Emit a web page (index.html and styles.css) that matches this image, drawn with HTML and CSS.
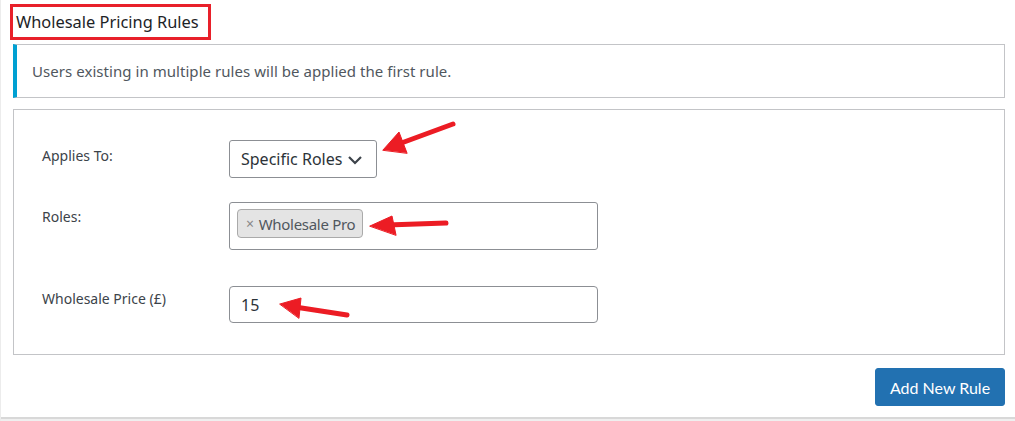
FILE: index.html
```html
<!DOCTYPE html>
<html>
<head>
<meta charset="utf-8">
<link rel="stylesheet" href="styles.css">
</head>
<body>
<div class="page">
  <h2 class="title">Wholesale Pricing Rules</h2>
  <div class="notice">Users existing in multiple rules will be applied the first rule.</div>
  <div class="rule">
    <div class="row row-applies">
      <div class="label">Applies To:</div>
      <div class="select">
        <span>Specific Roles</span>
        <svg class="chev" width="16" height="10" viewBox="0 0 16 10"><path d="M2 2 L8 8 L14 2" fill="none" stroke="#3c434a" stroke-width="2.2"/></svg>
      </div>
    </div>
    <div class="row row-roles">
      <div class="label">Roles:</div>
      <div class="multi">
        <span class="chip"><span class="x">×</span>Wholesale Pro</span>
      </div>
    </div>
    <div class="row row-price">
      <div class="label">Wholesale Price (£)</div>
      <div class="input">15</div>
    </div>
  </div>
  <div class="actions">
    <button class="btn">Add New Rule</button>
  </div>
</div>
<svg class="arrows" width="1015" height="421" viewBox="0 0 1015 421">
  <g fill="#ec1c24" stroke="#ec1c24" stroke-linecap="round" stroke-linejoin="round">
    <line x1="452" y1="124" x2="395" y2="145" stroke-width="5"/>
    <polygon points="382,150 398,132 406,153" stroke-width="1"/>
    <line x1="445" y1="223" x2="386" y2="225" stroke-width="5"/>
    <polygon points="369,226 391,216 395,235" stroke-width="1"/>
    <line x1="346" y1="315" x2="294" y2="307" stroke-width="5"/>
    <polygon points="279,304 300,298 298,318" stroke-width="1"/>
  </g>
</svg>
</body>
</html>
```
FILE: styles.css
```css
html, body {
  margin: 0;
  padding: 0;
  background: #fff;
}
body {
  width: 1015px;
  height: 421px;
  position: relative;
  overflow: hidden;
  font-family: "Noto Sans", "Open Sans", sans-serif;
  color: #3c434a;
  border-left: 1px solid #ececec;
  box-sizing: border-box;
}
.page {
  padding: 4px 10px 0 9px;
  height: 413px;
  border-bottom: 2px solid #d8d8d8;
  box-shadow: 0 2px 0 #efefef;
}
.title {
  display: inline-block;
  margin: 0;
  padding: 0 9px 0 3px;
  height: 30px;
  line-height: 29px;
  border: 3px solid #e8202a;
  font-size: 16.4px;
  font-weight: 400;
  color: #1d2327;
}
.notice {
  margin: 4px 0 0 3px;
  height: 52px;
  border: 1px solid #c3c4c7;
  border-left: 4px solid #00a0d2;
  padding-left: 15px;
  line-height: 52px;
  font-size: 15px;
  letter-spacing: 0.05px;
  color: #50575e;
}
.rule {
  margin: 11px 0 0 3px;
  border: 1px solid #c3c4c7;
  height: 246px;
  box-sizing: border-box;
  padding: 30px 28px 0 28px;
  display: flex;
  flex-direction: column;
}
.row {
  display: grid;
  grid-template-columns: 187px 369px;
}
.label {
  font-size: 14px;
  color: #3c434a;
}
.row-applies .label { padding-top: 6px; }
.row-roles { margin-top: 24px; }
.row-roles .label { padding-top: 5px; }
.row-price { margin-top: 36px; }
.row-price .label { padding-top: 3px; }
.select {
  width: 148px;
  height: 38px;
  box-sizing: border-box;
  border: 1px solid #8c8f94;
  border-radius: 3px;
  display: flex;
  align-items: center;
  padding-left: 11px;
  gap: 5px;
  font-size: 16px;
  color: #2c3338;
}
.chev { margin-top: 1px; }
.multi {
  height: 48px;
  box-sizing: border-box;
  border: 1px solid #8c8f94;
  border-radius: 3px;
  padding: 6px 7px;
}
.chip {
  display: inline-flex;
  align-items: center;
  height: 29px;
  box-sizing: border-box;
  padding: 0 7px 0 8px;
  background: #e4e4e4;
  border: 1px solid #aaa;
  border-radius: 4px;
  font-size: 15px;
  color: #50575e;
  letter-spacing: -0.3px;
}
.x {
  color: #888;
  font-size: 14px;
  margin-right: 5px;
}
.input {
  height: 37px;
  box-sizing: border-box;
  border: 1px solid #8c8f94;
  border-radius: 4px;
  padding-left: 11px;
  display: flex;
  align-items: center;
  font-size: 16px;
  color: #2c3338;
}
.actions {
  display: flex;
  justify-content: flex-end;
  margin-top: 13px;
}
.btn {
  width: 130px;
  height: 38px;
  background: #2271b1;
  border: 1px solid #2271b1;
  border-radius: 3px;
  color: #fff;
  font-family: Lato, "Noto Sans", sans-serif;
  font-size: 16px;
  padding: 0;
}
.arrows {
  position: absolute;
  left: 0;
  top: 0;
  pointer-events: none;
}
```
